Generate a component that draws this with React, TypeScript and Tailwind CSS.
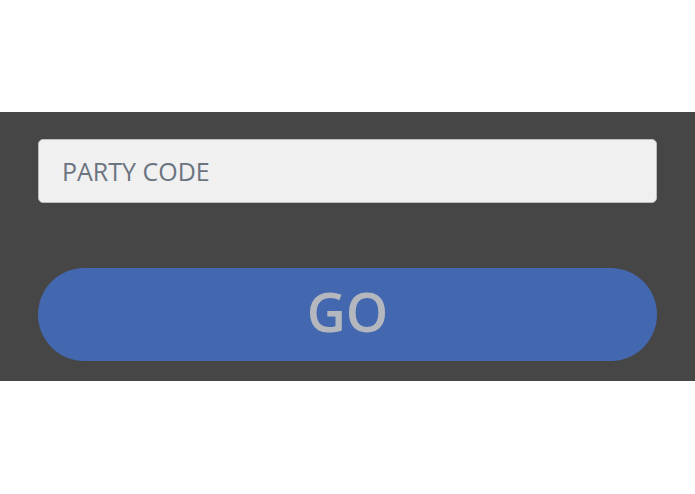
export default function App() {
  return (
    <div className="h-[494px] w-full bg-white" style={{ fontFamily: '"Open Sans", sans-serif' }}>
      <div className="h-[112px]" />
      <div className="flex h-[269px] flex-col bg-[#464646] px-[38px] pt-[27px]">
        <input
          type="text"
          placeholder="PARTY CODE"
          className="h-[64px] w-full rounded-[5px] border border-[#bdbdbd] bg-[#f0f0f0] px-[23px] text-[25px] text-[#6b7480] placeholder:text-[#6b7480] outline-none"
        />
        <button
          type="button"
          className="mt-[65px] h-[93px] w-full rounded-full bg-[#4468b0] pb-[7px] text-[54px] font-semibold text-[#b4b8be]"
        >
          GO
        </button>
      </div>
    </div>
  )
}
